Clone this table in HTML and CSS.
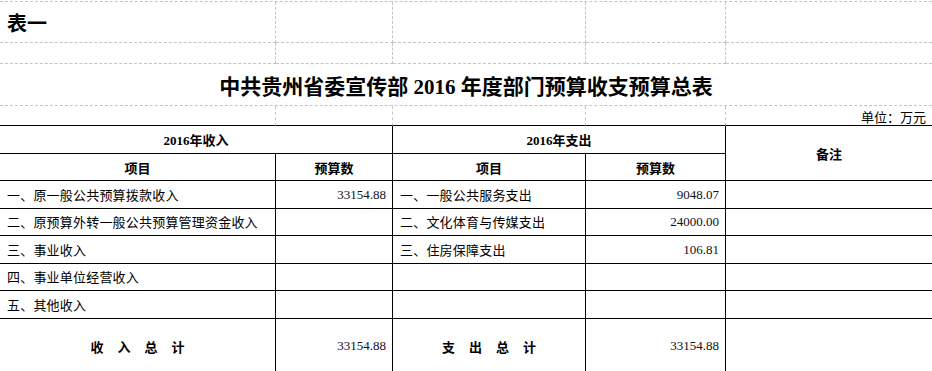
FILE: index.html
```html
<!DOCTYPE html>
<html lang="zh-CN">
<head>
<meta charset="utf-8">
<title>中共贵州省委宣传部2016年度部门预算收支预算总表</title>
<link rel="stylesheet" href="styles.css">
</head>
<body>
<div class="sheet">
  <div class="cell dash label">表一</div>
  <div class="cell dash"></div>
  <div class="cell dash"></div>
  <div class="cell dash"></div>
  <div class="cell dash last"></div>

  <div class="cell dash"></div>
  <div class="cell dash"></div>
  <div class="cell dash"></div>
  <div class="cell dash"></div>
  <div class="cell dash last"></div>

  <div class="cell title">中共贵州省委宣传部 2016 年度部门预算收支预算总表</div>

  <div class="cell unitrow"></div>
  <div class="cell unitrow"></div>
  <div class="cell unitrow"></div>
  <div class="cell unitrow"></div>
  <div class="cell unitrow last unit">单位：万元</div>

  <div class="cell head span2">2016年收入</div>
  <div class="cell head span2">2016年支出</div>
  <div class="cell head last note">备注</div>

  <div class="cell head">项目</div>
  <div class="cell head">预算数</div>
  <div class="cell head">项目</div>
  <div class="cell head">预算数</div>

  <div class="cell item">一、原一般公共预算拨款收入</div>
  <div class="cell num">33154.88</div>
  <div class="cell item">一、一般公共服务支出</div>
  <div class="cell num">9048.07</div>
  <div class="cell last"></div>

  <div class="cell item">二、原预算外转一般公共预算管理资金收入</div>
  <div class="cell num"></div>
  <div class="cell item">二、文化体育与传媒支出</div>
  <div class="cell num">24000.00</div>
  <div class="cell last"></div>

  <div class="cell item">三、事业收入</div>
  <div class="cell num"></div>
  <div class="cell item">三、住房保障支出</div>
  <div class="cell num">106.81</div>
  <div class="cell last"></div>

  <div class="cell item">四、事业单位经营收入</div>
  <div class="cell num"></div>
  <div class="cell item"></div>
  <div class="cell num"></div>
  <div class="cell last"></div>

  <div class="cell item">五、其他收入</div>
  <div class="cell num"></div>
  <div class="cell item"></div>
  <div class="cell num"></div>
  <div class="cell last"></div>

  <div class="cell total"><span class="spaced">收入总计</span></div>
  <div class="cell num total-num">33154.88</div>
  <div class="cell total"><span class="spaced">支出总计</span></div>
  <div class="cell num total-num">33154.88</div>
  <div class="cell last total-end"></div>
</div>
</body>
</html>
```

FILE: styles.css
```css
html, body {
  margin: 0;
  padding: 0;
  background: #ffffff;
}

body {
  font-family: "Noto Sans CJK SC", "Liberation Sans", sans-serif;
  color: #000;
  overflow: hidden;
}

.sheet {
  margin-top: 1px;
  display: grid;
  grid-template-columns: 276px 117px 193px 140px 1fr;
  grid-template-rows: 41px 21px 42px 20px 28px 27px 28px 27px 28px 27px 28px 54px;
  border-top: 1px dashed #c4c4c4;
}

.cell {
  box-sizing: border-box;
  border-right: 1px solid #000;
  border-bottom: 1px solid #000;
  display: flex;
  align-items: center;
  min-width: 0;
  white-space: nowrap;
  overflow: hidden;
}

.cell.last {
  border-right: none;
}

.dash {
  border-right: 1px dashed #c4c4c4;
  border-bottom: 1px dashed #c4c4c4;
}

.dash.last {
  border-right: none;
}

.label {
  padding-left: 7px;
  font-size: 20px;
  font-weight: 700;
}

.title {
  grid-column: 1 / -1;
  border-right: none;
  border-bottom: 1px dashed #c4c4c4;
  justify-content: center;
  font-family: "Liberation Serif", "Noto Sans CJK SC", serif;
  font-size: 21px;
  font-weight: 700;
  letter-spacing: 0;
}

.unitrow {
  border-right: 1px dashed #c4c4c4;
  border-bottom: 1px solid #000;
}

.unitrow.last {
  border-right: none;
}

.unit {
  justify-content: flex-end;
  align-items: flex-start;
  padding-top: 1px;
  padding-right: 6px;
  font-size: 13px;
  letter-spacing: 0;
}

.head {
  justify-content: center;
  font-family: "Liberation Serif", "Noto Sans CJK SC", serif;
  font-size: 13px;
  font-weight: 700;
}

.span2 {
  grid-column: span 2;
}

.note {
  grid-row: span 2;
}

.item {
  padding-left: 7px;
  padding-bottom: 1px;
  font-size: 13px;
  letter-spacing: 0.2px;
}

.num {
  justify-content: flex-end;
  padding-right: 6px;
  font-family: "Liberation Serif", serif;
  font-size: 13px;
  color: #101018;
}

.total {
  justify-content: center;
  border-bottom: none;
  font-size: 13px;
  font-weight: 700;
}

.spaced {
  letter-spacing: 14px;
  margin-right: -14px;
}

.total-num {
  border-bottom: none;
}

.total-end {
  border-bottom: none;
}
```
